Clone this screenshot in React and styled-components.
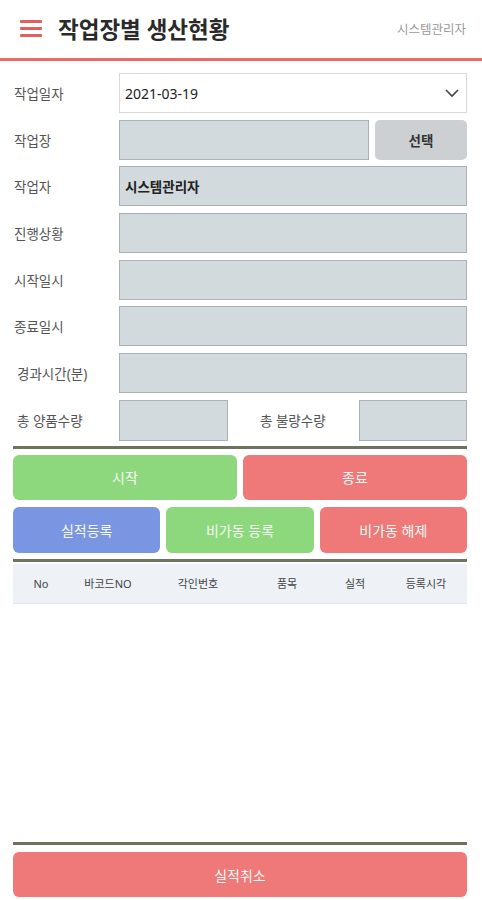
import React from "react";
import styled, { createGlobalStyle } from "styled-components";

const GlobalStyle = createGlobalStyle`
  html, body {
    margin: 0;
    padding: 0;
    background: #ffffff;
    font-family: "Noto Sans", "Noto Sans CJK KR", sans-serif;
  }
  * { box-sizing: border-box; }
`;

const Page = styled.div`
  width: 482px;
  height: 900px;
  display: flex;
  flex-direction: column;
  background: #fff;
`;

const Header = styled.header`
  height: 61px;
  display: flex;
  align-items: center;
  padding: 0 16px 2px 20px;
  border-bottom: 3px solid #e86b6b;
`;

const Burger = styled.div`
  width: 22px;
  display: flex;
  flex-direction: column;
  gap: 4px;
  margin-right: 16px;

  span {
    display: block;
    height: 3px;
    background: #e05f5f;
    border-radius: 1px;
  }
`;

const Title = styled.h1`
  margin: 0;
  flex: 1;
  font-size: 22.5px;
  font-weight: 700;
  color: #2a2a2a;
  letter-spacing: 0;
`;

const User = styled.span`
  font-size: 12.5px;
  color: #9a9a9a;
`;

const Body = styled.main`
  flex: 1;
  display: flex;
  flex-direction: column;
  padding: 12px 15px 3px 13px;
`;

const Form = styled.div`
  display: flex;
  flex-direction: column;
  gap: 6.7px;
`;

const Row = styled.div`
  display: grid;
  grid-template-columns: 100px 1fr ${({ side }) => (side ? "92px" : "")};
  column-gap: 6px;
  height: 40px;
  align-items: stretch;
`;

const QtyRow = styled.div`
  display: grid;
  grid-template-columns: 106px 109px 1fr 108px;
  height: 41px;
`;

const Label = styled.label`
  display: flex;
  align-items: center;
  padding-left: ${({ indent }) => (indent ? "4px" : "1px")};
  font-size: 13.5px;
  color: #555;
  white-space: nowrap;
`;

const Field = styled.div`
  display: flex;
  align-items: center;
  padding: 0 5px;
  background: ${({ white }) => (white ? "#ffffff" : "#d2dade")};
  border: 1px solid ${({ white }) => (white ? "#d9d9d9" : "#a9b2b6")};
  font-size: ${({ bold }) => (bold ? "13.5px" : "14px")};
  font-weight: ${({ bold }) => (bold ? 700 : 400)};
  color: #222;
`;

const Chevron = styled.svg`
  margin-left: auto;
  margin-right: 2px;
`;

const SelectBtn = styled.button`
  border: none;
  border-radius: 5px;
  background: #ccd0d3;
  font-family: inherit;
  font-size: 13.5px;
  font-weight: 700;
  color: #333;
`;

const Divider = styled.hr`
  margin: ${({ m }) => m || "5px 0 6px"};
  border: none;
  height: 3px;
  background: #6d735f;
`;

const ButtonRow = styled.div`
  display: grid;
  grid-template-columns: repeat(${({ cols }) => cols}, 1fr);
  gap: 6px;
  height: ${({ h }) => h}px;
  margin-bottom: ${({ mb }) => mb || 0}px;
`;

const colors = {
  green: "#8dd87d",
  red: "#ef7878",
  blue: "#7a96e2",
};

const ActionBtn = styled.button`
  border: none;
  border-radius: 6px;
  background: ${({ tone }) => colors[tone]};
  color: #f4f8f2;
  font-family: inherit;
  font-size: 14px;
  height: 100%;
`;

const TableHead = styled.div`
  display: grid;
  grid-template-columns: 56px 78px 102px 76px 60px 82px;
  height: 40px;
  align-items: center;
  background: #eef1f6;
  border-bottom: 1px solid #e2e6ec;
  margin-top: -5px;

  span {
    text-align: center;
    font-size: 11px;
    color: #444;
  }
`;

const Spacer = styled.div`
  flex: 1;
`;

const CancelBtn = styled(ActionBtn)`
  height: 45px;
  width: 100%;
`;

export default function App() {
  return (
    <Page>
      <GlobalStyle />
      <Header>
        <Burger>
          <span />
          <span />
          <span />
        </Burger>
        <Title>작업장별 생산현황</Title>
        <User>시스템관리자</User>
      </Header>
      <Body>
        <Form>
          <Row>
            <Label>작업일자</Label>
            <Field white>
              2021-03-19
              <Chevron width="14" height="9" viewBox="0 0 14 9">
                <path d="M1 1l6 6 6-6" fill="none" stroke="#444" strokeWidth="1.6" />
              </Chevron>
            </Field>
          </Row>
          <Row side>
            <Label>작업장</Label>
            <Field />
            <SelectBtn>선택</SelectBtn>
          </Row>
          <Row>
            <Label>작업자</Label>
            <Field bold>시스템관리자</Field>
          </Row>
          <Row>
            <Label>진행상황</Label>
            <Field />
          </Row>
          <Row>
            <Label>시작일시</Label>
            <Field />
          </Row>
          <Row>
            <Label>종료일시</Label>
            <Field />
          </Row>
          <Row>
            <Label indent>경과시간(분)</Label>
            <Field />
          </Row>
          <QtyRow>
            <Label indent>총 양품수량</Label>
            <Field />
            <Label style={{ paddingLeft: 32 }}>총 불량수량</Label>
            <Field />
          </QtyRow>
        </Form>
        <Divider />
        <ButtonRow cols={2} h={45} mb={7}>
          <ActionBtn tone="green">시작</ActionBtn>
          <ActionBtn tone="red">종료</ActionBtn>
        </ButtonRow>
        <ButtonRow cols={3} h={46}>
          <ActionBtn tone="blue">실적등록</ActionBtn>
          <ActionBtn tone="green">비가동 등록</ActionBtn>
          <ActionBtn tone="red">비가동 해제</ActionBtn>
        </ButtonRow>
        <Divider m="6px 0 7px" />
        <TableHead>
          <span>No</span>
          <span>바코드NO</span>
          <span>각인번호</span>
          <span>품목</span>
          <span>실적</span>
          <span>등록시각</span>
        </TableHead>
        <Spacer />
        <Divider m="0 0 7px" />
        <CancelBtn tone="red">실적취소</CancelBtn>
      </Body>
    </Page>
  );
}
